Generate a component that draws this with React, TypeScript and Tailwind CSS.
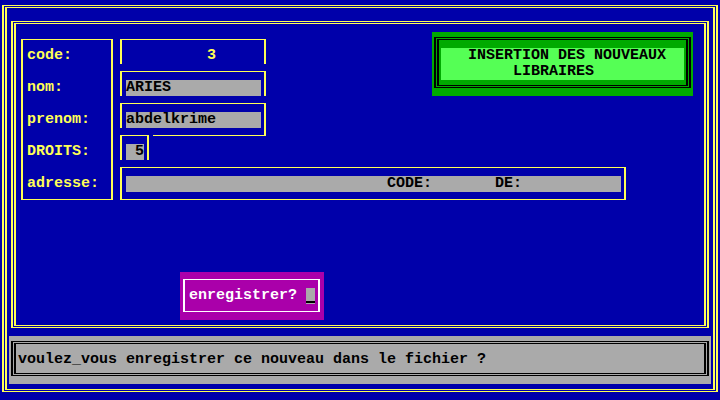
export default function App() {
  return (
    <div className="w-[720px] h-[400px] overflow-hidden bg-[#0000aa] grid grid-cols-[repeat(80,9px)] grid-rows-[repeat(25,16px)] font-['Liberation_Mono',monospace] text-[15px] leading-[16px] font-bold whitespace-pre">
      {/* outer double frame */}
      <div className="col-start-1 col-end-81 row-start-1 row-end-26 ml-[2px] mt-[5px] mr-[2px] mb-[8px] border-x-2 border-y border-[#ffff55]" />
      <div className="col-start-1 col-end-81 row-start-1 row-end-26 ml-[5px] mt-[7px] mr-[5px] mb-[10px] border-x-2 border-y border-[#ffff55]" />

      {/* form double frame */}
      <div className="col-start-2 col-end-80 row-start-2 row-end-22 ml-[2px] mt-[5px] mr-[2px] mb-[8px] border-x-2 border-y border-[#ffff55]" />
      <div className="col-start-2 col-end-80 row-start-2 row-end-22 ml-[5px] mt-[7px] mr-[5px] mb-[10px] border-x-2 border-y border-[#ffff55]" />

      {/* labels */}
      <div className="col-start-3 col-end-14 row-start-3 row-end-14 ml-[3px] mt-[7px] mr-[4px] mb-[8px] border-x-2 border-y border-[#ffff55]" />
      <div className="col-start-4 col-end-13 row-start-4 text-[#ffff55]">code:</div>
      <div className="col-start-4 col-end-13 row-start-6 text-[#ffff55]">nom:</div>
      <div className="col-start-4 col-end-13 row-start-8 text-[#ffff55]">prenom:</div>
      <div className="col-start-4 col-end-13 row-start-10 text-[#ffff55]">DROITS:</div>
      <div className="col-start-4 col-end-13 row-start-12 text-[#ffff55]">adresse:</div>

      {/* code */}
      <div className="col-start-14 col-end-31 row-start-3 row-end-5 ml-[3px] mt-[7px] mr-[4px] border-t border-x-2 border-[#ffff55]" />
      <div className="col-start-24 col-end-26 row-start-4 text-[#ffff55]">3</div>

      {/* nom */}
      <div className="col-start-14 col-end-31 row-start-5 row-end-7 ml-[3px] mt-[7px] mr-[4px] border-t border-x-2 border-[#ffff55]" />
      <div className="col-start-15 col-end-30 row-start-6 bg-[#aaaaaa] text-black">ARIES</div>

      {/* prenom */}
      <div className="col-start-14 col-end-31 row-start-7 row-end-9 ml-[3px] mt-[7px] mr-[4px] border-t border-x-2 border-[#ffff55]" />
      <div className="col-start-15 col-end-30 row-start-8 bg-[#aaaaaa] text-black">abdelkrime</div>
      <div className="col-start-18 col-end-31 row-start-9 mr-[4px] mb-[8px] border-b border-r-2 border-[#ffff55]" />

      {/* droits */}
      <div className="col-start-14 col-end-18 row-start-9 row-end-11 ml-[3px] mt-[7px] mr-[4px] border-t border-x-2 border-[#ffff55]" />
      <div className="col-start-15 col-end-17 row-start-10 bg-[#aaaaaa] text-black">{' 5'}</div>

      {/* adresse */}
      <div className="col-start-14 col-end-71 row-start-11 row-end-14 ml-[3px] mt-[7px] mr-[4px] mb-[8px] border-x-2 border-y border-[#ffff55]" />
      <div className="col-start-15 col-end-70 row-start-12 bg-[#aaaaaa] text-black">
        {'                             CODE:       DE:'}
      </div>

      {/* title */}
      <div className="col-start-49 col-end-78 row-start-3 row-end-7 bg-[#00aa00]" />
      <div className="col-start-49 col-end-78 row-start-3 row-end-7 ml-[2px] mt-[5px] mr-[2px] mb-[8px] border-x-2 border-y border-black" />
      <div className="col-start-49 col-end-78 row-start-3 row-end-7 ml-[5px] mt-[7px] mr-[5px] mb-[10px] border-x-2 border-y border-black" />
      <div className="col-start-50 col-end-77 row-start-4 row-end-6 bg-[#55ff55]" />
      <div className="col-start-53 col-end-76 row-start-4 text-black">INSERTION DES NOUVEAUX</div>
      <div className="col-start-58 col-end-76 row-start-5 text-black">LIBRAIRES</div>

      {/* prompt */}
      <div className="col-start-21 col-end-37 row-start-18 row-end-21 bg-[#aa00aa]" />
      <div className="col-start-21 col-end-37 row-start-18 row-end-21 ml-[3px] mt-[7px] mr-[4px] mb-[8px] border-x-2 border-y border-white" />
      <div className="col-start-22 col-end-34 row-start-19 text-white">enregistrer?</div>
      <div className="col-start-35 row-start-19 bg-[#aaaaaa] flex flex-col">
        <div className="mt-[13px] h-[2px] bg-black" />
      </div>

      {/* message bar */}
      <div className="col-start-2 col-end-80 row-start-22 row-end-25 bg-[#aaaaaa]" />
      <div className="col-start-2 col-end-80 row-start-22 row-end-25 ml-[2px] mt-[5px] mr-[2px] mb-[8px] border-x-2 border-y border-black" />
      <div className="col-start-2 col-end-80 row-start-22 row-end-25 ml-[5px] mt-[7px] mr-[5px] mb-[10px] border-x-2 border-y border-black" />
      <div className="col-start-3 col-end-79 row-start-23 text-black">
        voulez_vous enregistrer ce nouveau dans le fichier ?
      </div>
    </div>
  );
}
